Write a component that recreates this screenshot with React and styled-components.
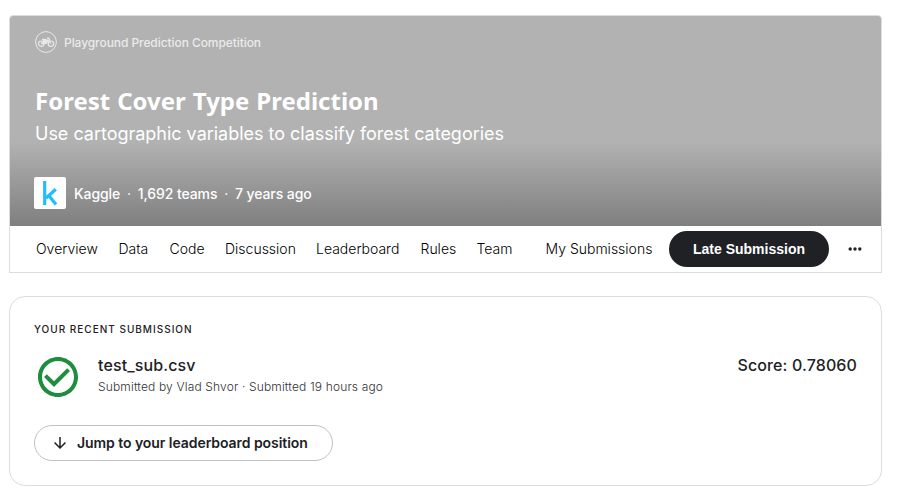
import React from "react";
import styled, { createGlobalStyle } from "styled-components";

const Global = createGlobalStyle`
  * { box-sizing: border-box; }
  body { margin: 0; background: #fff; font-family: Inter, "Liberation Sans", sans-serif; color: #202124; }
`;

const Page = styled.main`
  width: 873px;
  margin: 15px 0 0 9px;
  display: flex;
  flex-direction: column;
  gap: 23px;
`;

const Competition = styled.header`
  height: 258px;
  border: 1px solid #dadce0;
  border-radius: 4px 4px 0 0;
  overflow: hidden;
`;

const Banner = styled.div`
  height: 210px;
  padding: 15px 24px 0 25px;
  color: #fff;
  background: linear-gradient(to bottom, #b2b2b2 0, #b2b2b2 126px, #7f7f7f 210px);
  white-space: nowrap;
`;

const Kind = styled.div`
  display: flex;
  align-items: center;
  gap: 7px;
  height: 22px;
  font-size: 12px;
  font-weight: 500;
  letter-spacing: -0.07px;
  color: rgba(255, 255, 255, 0.75);
`;

const Title = styled.h1`
  margin: 33px 0 0;
  height: 30px;
  font: 700 24px/30px "Noto Sans", sans-serif;
  word-spacing: 0.7px;
`;

const Subtitle = styled.div`
  height: 24px;
  margin-top: 6px;
  font-size: 18px;
  line-height: 24px;
  letter-spacing: -0.015px;
`;

const Host = styled.div`
  display: flex;
  align-items: center;
  height: 32px;
  margin: 31px 0 0 -1px;
  font-size: 14px;
  font-weight: 500;
  letter-spacing: -0.08px;
`;

const HostLogo = styled.span`
  display: flex;
  width: 32px;
  height: 32px;
  margin-right: 8px;
  background: #fff;
  border-radius: 2px;
`;

const Dot = styled.span`
  width: 17.5px;
  text-align: center;
  font-weight: 400;
`;

const Nav = styled.nav`
  display: flex;
  align-items: center;
  height: 46px;
  padding-left: 26px;
  background: #fff;
  white-space: nowrap;
`;

const NavLink = styled.a`
  width: ${(p) => p.$w}px;
  flex: none;
  font-size: 14px;
  font-weight: 300;
  line-height: 20px;
  color: #000;
`;

const LateButton = styled.button`
  width: 160px;
  height: 36px;
  flex: none;
  padding: 0;
  border: 0;
  border-radius: 18px;
  background: #202124;
  color: #fff;
  font: 700 14px "Liberation Sans", Arial, sans-serif;
`;

const More = styled.svg`
  flex: none;
  margin-left: 17px;
`;

const Card = styled.section`
  height: 190px;
  padding: 25px 24px 0;
  border: 1px solid #dadce0;
  border-radius: 16px;
  white-space: nowrap;
`;

const Label = styled.h2`
  margin: 0;
  font-size: 10px;
  line-height: 14px;
  font-weight: 500;
  letter-spacing: 1px;
`;

const Submission = styled.div`
  display: flex;
  height: 48px;
  margin-top: 17px;
`;

const Details = styled.div`
  flex: 1;
  margin-left: 16px;
`;

const FileName = styled.div`
  font-size: 16px;
  line-height: 24px;
  font-weight: 500;
  letter-spacing: 0.12px;
`;

const Meta = styled.div`
  font-size: 12px;
  line-height: 20px;
  font-weight: 300;
  letter-spacing: 0.15px;
  color: #303134;
`;

const JumpButton = styled.button`
  display: flex;
  align-items: center;
  width: 299px;
  height: 36px;
  margin-top: 24px;
  padding: 0 0 1px 16px;
  gap: 8px;
  border: 1px solid #bdc1c6;
  border-radius: 18px;
  background: #fff;
  color: #202124;
  font: 600 14px Inter, sans-serif;
  letter-spacing: -0.06px;
  white-space: nowrap;
`;

const links = [
  ["Overview", 82.5], ["Data", 51], ["Code", 55.5], ["Discussion", 91],
  ["Leaderboard", 104.5], ["Rules", 56], ["Team", 69], ["My Submissions", 123.5],
];

const Bike = () => (
  <svg width="22" height="22" viewBox="0 0 22 22" fill="none" stroke="#e8e8e8">
    <circle cx="11" cy="11" r="10.4" />
    <circle cx="6.2" cy="12.7" r="2.7" strokeWidth="1.2" />
    <circle cx="15.9" cy="12.7" r="2.7" strokeWidth="1.2" />
    <path d="M6 12.5 9 9.3h4.2l2.7 3.4M7 8.4h3l3 1M12 7.2h1.8l1 2.4M6.2 12.7H10l2.8-2.5" strokeWidth="1.2" />
    <path d="M8 9h5.5l-2 4H9z" fill="#e8e8e8" stroke="none" />
  </svg>
);

export default function App() {
  return (
    <>
      <Global />
      <Page>
        <Competition>
          <Banner>
            <Kind><Bike /><span>Playground Prediction Competition</span></Kind>
            <Title>Forest Cover Type Prediction</Title>
            <Subtitle>Use cartographic variables to classify forest categories</Subtitle>
            <Host>
              <HostLogo>
                <svg width="32" height="32" fill="none" stroke="#20beff" strokeWidth="3.2">
                  <path d="M10.7 4v24M21.8 12.2l-9.7 8.8M14.5 18.2l7.5 9.3" />
                </svg>
              </HostLogo>
              <span>Kaggle</span><Dot>·</Dot><span>1,692 teams</span><Dot>·</Dot><span>7 years ago</span>
            </Host>
          </Banner>
          <Nav>
            {links.map(([name, w]) => <NavLink key={name} $w={w}>{name}</NavLink>)}
            <LateButton>Late Submission</LateButton>
            <More width="18" height="18" fill="#202124">
              <circle cx="4.2" cy="9" r="1.7" /><circle cx="9" cy="9" r="1.7" /><circle cx="13.8" cy="9" r="1.7" />
            </More>
          </Nav>
        </Competition>
        <Card>
          <Label>YOUR RECENT SUBMISSION</Label>
          <Submission>
            <svg width="48" height="48" viewBox="0 0 24 24" fill="#1e8e3e">
              <path d="M16.59 7.58 10 14.17l-3.59-3.58L5 12l5 5 8-8zM12 2C6.48 2 2 6.48 2 12s4.48 10 10 10 10-4.48 10-10S17.52 2 12 2zm0 18c-4.42 0-8-3.58-8-8s3.58-8 8-8 8 3.58 8 8-3.58 8-8 8z" />
            </svg>
            <Details>
              <FileName>test_sub.csv</FileName>
              <Meta>Submitted by Vlad Shvor · Submitted 19 hours ago</Meta>
            </Details>
            <FileName>Score: 0.78060</FileName>
          </Submission>
          <JumpButton>
            <svg width="18" height="18" viewBox="0 0 24 24" fill="#202124">
              <path d="m20 12-1.41-1.41L13 16.17V4h-2v12.17l-5.58-5.59L4 12l8 8z" />
            </svg>
            <span>Jump to your leaderboard position</span>
          </JumpButton>
        </Card>
      </Page>
    </>
  );
}
